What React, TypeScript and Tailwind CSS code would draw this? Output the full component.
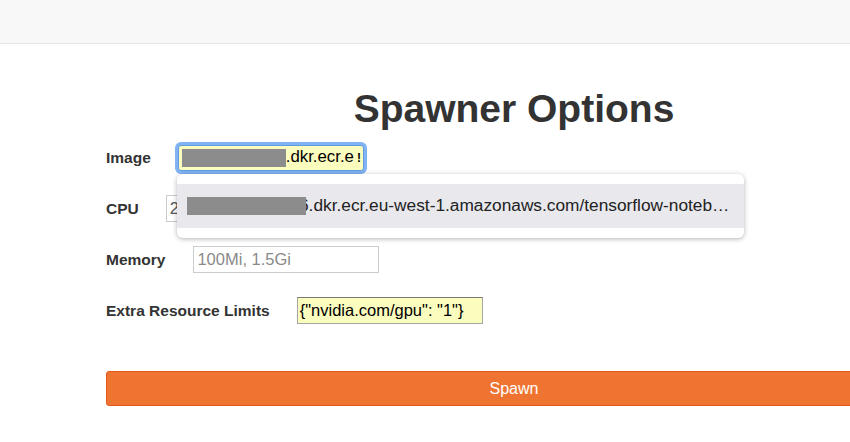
export default function App() {
  const label = "text-[15.5px] font-bold text-[#333] leading-none whitespace-nowrap";
  return (
    <div className="relative w-[850px] h-[442px] overflow-hidden bg-white font-['Liberation_Sans',Arial,sans-serif]">
      {/* Top navbar */}
      <div className="h-[44px] bg-[#f8f8f8] border-b border-[#e5e5e5]" />

      <div className="ml-[106px] w-[816px]">
        <h1 className="mt-[43px] text-center text-[39px] leading-[43px] font-bold text-[#333]">
          Spawner Options
        </h1>

        <div className="mt-[14px] flex flex-col gap-[24px]">
          {/* Image */}
          <div className="flex items-center gap-[27px] h-[27px]">
            <span className={label}>Image</span>
            <div className="relative w-[186px] h-[26px] rounded-[3px] border border-[#5f9de0] bg-[#fbfdbf] shadow-[0_0_0_3px_#80b2f4] overflow-hidden flex items-center pl-[3px]">
              <span className="w-[104px] h-[18px] bg-[#8c8c8c] shrink-0" />
              <span className="text-[16.8px] text-black leading-none whitespace-nowrap">.dkr.ecr.e</span>
              <span className="ml-[3px] text-[12px] font-bold text-black leading-none">!</span>
            </div>
          </div>

          {/* CPU */}
          <div className="flex items-center gap-[27px] h-[27px]">
            <span className={label}>CPU</span>
            <div className="w-[186px] h-[27px] border border-[#ccc] flex items-center pl-[3px] text-[16.5px] text-[#555]">
              2
            </div>
          </div>

          {/* Memory */}
          <div className="flex items-center gap-[28px] h-[27px]">
            <span className={label}>Memory</span>
            <div className="w-[186px] h-[27px] border border-[#ccc] flex items-center pl-[3px] text-[16.5px] text-[#8a8a8a] whitespace-nowrap">
              100Mi, 1.5Gi
            </div>
          </div>

          {/* Extra Resource Limits */}
          <div className="flex items-center gap-[27px] h-[27px]">
            <span className={label}>Extra Resource Limits</span>
            <div className="w-[186px] h-[27px] border border-[#a6a6a6] border-t-[#777] bg-[#fbfdbf] flex items-center pl-[2px] text-[16.5px] text-black whitespace-nowrap">
              {'{"nvidia.com/gpu": "1"}'}
            </div>
          </div>
        </div>

        <button className="mt-[47px] w-full h-[35px] rounded-[3px] border border-[#e2581f] bg-[#f07431] text-white text-[16px] leading-none flex items-center justify-center">
          Spawn
        </button>
      </div>

      {/* Autocomplete dropdown */}
      <div className="absolute left-[177px] top-[174px] w-[567px] h-[64px] rounded-[6px] bg-white shadow-[0_1px_5px_rgba(0,0,0,0.3)] py-[10px]">
        <div className="h-[44px] bg-[#e8e8ed] flex items-center pl-[10px] overflow-hidden">
          <span className="relative z-10 w-[119px] h-[18px] bg-[#8c8c8c] shrink-0" />
          <span className="-ml-[7px] text-[17.3px] text-[#222] leading-none whitespace-nowrap">
            6.dkr.ecr.eu-west-1.amazonaws.com/tensorflow-noteb…
          </span>
        </div>
      </div>
    </div>
  );
}
